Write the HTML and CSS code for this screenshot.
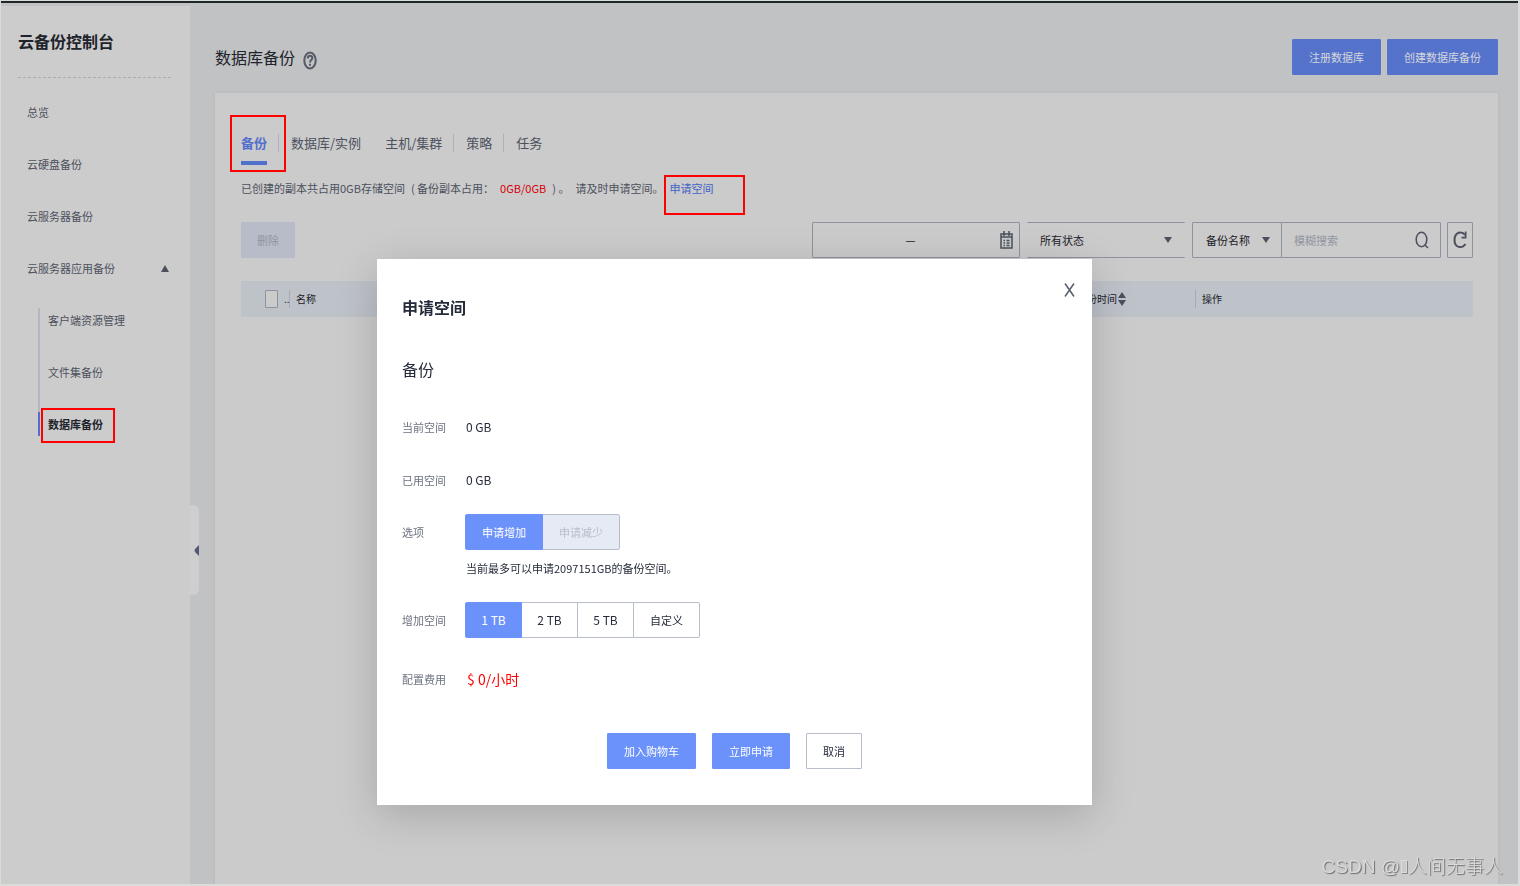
FILE: index.html
```html
<!DOCTYPE html>
<html lang="zh-CN">
<head>
<meta charset="utf-8">
<title>云备份控制台</title>
<link rel="stylesheet" href="styles.css">
</head>
<body>
<div class="topbar"></div>
<div class="shell">
  <aside class="sidebar">
    <h1 class="brand">云备份控制台</h1>
    <nav>
      <ul class="nav">
        <li><a href="#">总览</a></li>
        <li><a href="#">云硬盘备份</a></li>
        <li><a href="#">云服务器备份</a></li>
        <li><a href="#">云服务器应用备份
          <svg class="caret" width="8" height="7" viewBox="0 0 8 7"><path d="M4 0L8 7H0z"/></svg></a>
          <ul class="subnav">
            <li><a href="#">客户端资源管理</a></li>
            <li><a href="#">文件集备份</a></li>
            <li class="active"><a href="#">数据库备份</a><span class="mark mark-nav"></span></li>
          </ul>
        </li>
      </ul>
    </nav>
    <button class="handle" aria-label="收起菜单"><svg width="5" height="11" viewBox="0 0 5 11"><path d="M5 0v11L1 7Q0 5.500 1 4z"/></svg></button>
  </aside>

  <main class="main">
    <header class="page-head">
      <h2>数据库备份</h2>
      <svg class="help" width="14" height="19" viewBox="0 0 14 19"><ellipse cx="7" cy="9.500" rx="5.700" ry="8"/><path d="M4.800 7.500C4.800 3.800 9.300 4 9.300 7c0 2.200-2.300 2-2.300 4.500M7 12.800v2"/></svg>
      <div class="head-actions">
        <button class="btn dim">注册数据库</button>
        <button class="btn dim">创建数据库备份</button>
      </div>
    </header>

    <section class="panel">
      <div class="tabs">
        <a class="tab on" href="#">备份</a>
        <i class="sep"></i>
        <a class="tab" href="#">数据库/实例</a>
        <i class="sep none"></i>
        <a class="tab" href="#">主机/集群</a>
        <i class="sep"></i>
        <a class="tab" href="#">策略</a>
        <i class="sep"></i>
        <a class="tab" href="#">任务</a>
        <span class="mark mark-tab"></span>
      </div>
      <p class="usage">
        <span>已创建的副本共占用0GB存储空间</span>
        <span>( 备份副本占用：</span>
        <span class="red">0GB/0GB</span>
        <span>) 。</span>
        <span>请及时申请空间。</span>
        <a href="#">申请空间<span class="mark mark-link"></span></a>
      </p>

      <div class="toolbar">
        <button class="btn-delete" disabled>删除</button>
        <div class="field date">
          <input type="text" value="—" aria-label="时间范围" readonly>
          <svg width="13" height="18" viewBox="0 0 13 18"><path d="M1 3h11v14H1zM1 6h11M4 0v5M9 0v5"/><path d="M3.500 9.500h1.500M6.500 9.500h3M3.500 12h1.500M6.500 12h3M3.500 14.500h1.500M6.500 14.500h3"/></svg>
        </div>
        <div class="field status">
          <select aria-label="状态"><option>所有状态</option></select>
          <svg class="down" width="8" height="6" viewBox="0 0 8 6"><path d="M0 0h8L4 6z"/></svg>
        </div>
        <div class="field kind">
          <select aria-label="搜索字段"><option>备份名称</option></select>
          <svg class="down" width="8" height="6" viewBox="0 0 8 6"><path d="M0 0h8L4 6z"/></svg>
        </div>
        <div class="field search">
          <input type="text" placeholder="模糊搜索" aria-label="模糊搜索">
          <svg width="14" height="18" viewBox="0 0 14 18"><ellipse cx="6.500" cy="8.500" rx="5.300" ry="7.300"/><path d="M10 14l3 3"/></svg>
        </div>
        <button class="refresh" aria-label="刷新"><svg width="14" height="20" viewBox="0 0 14 20"><path d="M12 5C9 .5 1.500 2 1.500 10S9 19 12.500 14"/><path class="tip" d="M13.500 1.500v7H8.500V6.800h3.300V1.500z"/></svg></button>
      </div>

      <table class="grid">
        <colgroup><col class="c-check"><col><col class="c-time"><col class="c-op"></colgroup>
        <thead>
          <tr>
            <th><div class="cell check"><input type="checkbox" aria-label="全选"><span>..</span></div></th>
            <th><div class="cell line">名称</div></th>
            <th><div class="cell line">备份时间<svg width="8" height="16" viewBox="0 0 8 16"><path d="M4 1l4 6H0zM4 15L0 9h8z"/></svg></div></th>
            <th><div class="cell line">操作</div></th>
          </tr>
        </thead>
      </table>
    </section>
  </main>
</div>

<div class="dialog" role="dialog" aria-labelledby="dlg-title">
  <button class="close" aria-label="关闭"><svg width="11" height="14" viewBox="0 0 11 14"><path d="M1 .5l9 13M10 .5l-9 13"/></svg></button>
  <h2 id="dlg-title">申请空间</h2>
  <h3>备份</h3>
  <div class="form">
    <div class="row"><span class="label">当前空间</span><span class="value">0 GB</span></div>
    <div class="row"><span class="label">已用空间</span><span class="value">0 GB</span></div>
    <div class="row tall">
      <span class="label">选项</span>
      <div class="segment">
        <button class="seg on">申请增加</button><button class="seg off" disabled>申请减少</button>
      </div>
    </div>
    <p class="hint">当前最多可以申请2097151GB的备份空间。</p>
    <div class="row tall">
      <span class="label">增加空间</span>
      <div class="segment">
        <button class="seg size on">1 TB</button><button class="seg size">2 TB</button><button class="seg size">5 TB</button><button class="seg">自定义</button>
      </div>
    </div>
    <div class="row cost"><span class="label">配置费用</span><span class="price">$ 0/小时</span></div>
  </div>
  <div class="actions">
    <button class="btn">加入购物车</button>
    <button class="btn">立即申请</button>
    <button class="btn plain">取消</button>
  </div>
</div>
<div class="watermark">CSDN @<span class="missing"></span>人间无事人</div>
</body>
</html>
```
FILE: styles.css
```css
* { box-sizing: border-box; }
body, h1, h2, h3, p, ul { margin: 0; padding: 0; }
ul { list-style: none; }
a { color: inherit; text-decoration: none; }
button, input, select { font: inherit; color: inherit; margin: 0; padding: 0; }
body {
  display: flex;
  flex-direction: column;
  min-height: 100vh;
  border: 1px solid #dadcda;
  border-width: 1px 2px 2px 1px;
  background: #c1c2c4;
  color: #4c515d;
  font-family: "Noto Sans CJK SC", "Noto Sans", sans-serif;
  font-size: 11px;
  line-height: 20px;
}
.topbar { height: 2px; background: #20272b; }
.shell { flex: 1; display: flex; }

.sidebar {
  position: relative;
  flex: 0 0 189px;
  margin-top: 3px;
  background: #ccc;
}
.brand {
  margin: 0 19px 0 17px;
  padding: 23px 0 24px;
  border-bottom: 1px dashed #a9abb8;
  font-size: 16px;
  line-height: 24px;
  color: #20232a;
}
.nav { margin-top: 8px; }
.nav > li > a {
  display: flex;
  align-items: center;
  justify-content: space-between;
  padding: 0 21px 0 26px;
  line-height: 52px;
}
.caret { fill: #4b505c; }
.subnav {
  display: flex;
  flex-direction: column;
  gap: 28px;
  margin: 14px 0 0 37px;
  border-left: 2px solid #b4b7c3;
  line-height: 24px;
}
.subnav li { padding-left: 8px; }
.subnav .active {
  position: relative;
  margin-left: -2px;
  border-left: 2px solid #5170cc;
  color: #20232a;
  font-weight: 700;
}
.mark { position: absolute; border: 2px solid #f00; pointer-events: none; }
.mark-nav { left: 1px; top: -4px; width: 74px; height: 35px; }
.handle {
  position: absolute;
  left: 189px;
  top: 499px;
  display: flex;
  align-items: center;
  justify-content: flex-end;
  width: 9px;
  height: 90px;
  border: 0;
  border-radius: 0 6px 6px 0;
  background: #cecece;
}
.handle svg { fill: #535a78; }

.main {
  flex: 1;
  display: flex;
  flex-direction: column;
  padding: 36px 20px 0 25px;
}
.page-head { display: flex; align-items: center; height: 36px; margin-bottom: 18px; }
.page-head h2 { font-size: 16px; font-weight: 400; line-height: 24px; color: #20232a; }
.help { margin: 6px 0 0 8px; fill: none; stroke: #555a66; stroke-width: 2; }
.head-actions { display: flex; gap: 6px; margin-left: auto; }
.btn {
  height: 36px;
  padding: 0 16px;
  border: 1px solid #6b91fa;
  border-radius: 1px;
  background: #6b91fa;
  color: #fff;
}
.btn.dim { border-color: #5673cb; background: #5673cb; color: #d4d6dc; }
.btn.plain { border-color: #b8bdcc; background: #fff; color: #252b3a; }
.panel {
  flex: 1;
  padding: 38px 25px 0 26px;
  background: #cbcbcb;
  box-shadow: 0 0 4px rgba(0, 0, 0, .06);
}
.tabs {
  position: relative;
  display: flex;
  align-items: flex-start;
  font-size: 13px;
  line-height: 24px;
}
.tab { padding-bottom: 6px; border-bottom: 4px solid transparent; }
.tab.on { color: #5170cc; border-color: #5170cc; font-weight: 700; }
.sep { width: 1px; height: 18px; margin: 3px 12px 3px 11px; background: #aeb1bd; }
.sep.none { background: none; }
.mark-tab { left: -11px; top: -16px; width: 56px; height: 57px; }
.usage { display: flex; gap: 6px; margin-top: 13px; }
.usage .red { color: #d60008; }
.usage a { position: relative; color: #4263c6; }
.mark-link { left: -5px; top: -3px; width: 81px; height: 40px; }

.toolbar { display: flex; margin-top: 24px; color: #1c2028; }
.btn-delete {
  width: 54px;
  height: 36px;
  margin-right: auto;
  border: 0;
  border-radius: 1px;
  background: #b8bcc8;
  color: #9296a2;
}
.field {
  position: relative;
  display: flex;
  align-items: center;
  height: 36px;
  border: 1px solid #8e929f;
  border-radius: 1px;
}
.field input, .field select {
  width: 100%;
  height: 100%;
  border: 0;
  outline: 0;
  background: none;
  appearance: none;
}
.field input::placeholder { color: #9296a2; opacity: 1; }
.field svg { flex: none; fill: none; stroke: #4b505c; stroke-width: 1.500; }
.field .down { fill: #4b505c; stroke: none; }
.date { width: 208px; padding: 0 6px 0 8px; }
.date input { text-align: center; }
.status { width: 158px; margin: 0 7px; padding: 0 13px; border-width: 1px 0; }
.kind { width: 90px; padding: 0 11px 0 13px; }
.search { width: 160px; margin-left: -1px; padding: 0 11px 0 12px; }
.refresh {
  display: flex;
  align-items: center;
  justify-content: center;
  width: 26px;
  height: 36px;
  margin-left: 6px;
  border: 1px solid #8e929f;
  border-radius: 1px;
  background: none;
}
.refresh svg { fill: none; stroke: #4b505c; stroke-width: 2; }
.refresh .tip { fill: #4b505c; stroke: none; }

.grid {
  width: 100%;
  margin-top: 23px;
  border-collapse: collapse;
  table-layout: fixed;
  background: #bec2c9;
  color: #1c2028;
  font-size: 10px;
}
.grid th { height: 36px; padding: 0; font-weight: 400; text-align: left; }
.c-check { width: 48px; }
.c-time { width: 125px; }
.c-op { width: 278px; }
.cell { display: flex; align-items: center; gap: 1px; height: 18px; }
.line { padding-left: 6px; border-left: 1px solid #a6aab6; }
.cell svg { fill: #4b505c; }
.check { gap: 6px; padding-left: 24px; }
.check input {
  flex: none;
  width: 13px;
  height: 18px;
  border: 1px solid #8e929f;
  border-radius: 1px;
  background: #cbcbcb;
  appearance: none;
}

.dialog {
  position: fixed;
  left: 377px;
  top: 259px;
  width: 715px;
  padding: 36px 25px 36px;
  background: #fff;
  box-shadow: 0 10px 40px rgba(0, 0, 0, .18);
  color: #252b3a;
}
.dialog h2 { font-size: 16px; line-height: 24px; }
.dialog h3 { margin-top: 38px; font-size: 16px; font-weight: 400; line-height: 24px; }
.close {
  position: absolute;
  top: 24px;
  right: 17px;
  display: flex;
  border: 0;
  background: none;
}
.close svg { fill: none; stroke: #575d6c; stroke-width: 1.500; }
.form { margin-top: 36px; }
.row { display: flex; align-items: center; height: 20px; margin-bottom: 33px; }
.row.tall { height: 36px; }
.row.tall:nth-child(3) { margin: -9px 0 0; }
.label { flex: 0 0 63px; color: #6c7280; }
.value { font-size: 12px; padding-left: 1px; }
.segment { display: flex; }
.seg {
  height: 36px;
  padding: 0 16px;
  border: 1px solid #b8bdcc;
  background: #fff;
}
.seg:first-child { border-radius: 2px 0 0 2px; }
.seg:last-child { border-radius: 0 2px 2px 0; }
.seg + .seg { margin-left: -1px; }
.seg.size { width: 57px; padding: 0; font-size: 12px; }
.seg.on { position: relative; border-color: #6b91fa; background: #6b91fa; color: #fff; }
.seg.off { background: #e6eaf5; color: #b9bdc9; }
.hint { margin: 8px 0 24px 64px; }
.row.cost { margin: -2px 0 0; }
.price { padding-left: 2px; color: #f00; font-size: 14px; }
.actions { display: flex; justify-content: center; gap: 16px; margin-top: 44px; }

.watermark {
  position: fixed;
  right: 17px;
  bottom: 7px;
  color: #dadada;
  font-family: "Liberation Sans", "Noto Sans CJK SC", sans-serif;
  font-size: 19px;
  line-height: 24px;
  font-weight: 300;
  text-shadow: 1px 1px 1px #6c6c6c;
}
.missing {
  display: inline-block;
  width: 6px;
  height: 13px;
  margin: 0 1px;
  border: 1px solid #dadada;
  box-shadow: 1px 1px 0 #8a8a8a;
}
```
